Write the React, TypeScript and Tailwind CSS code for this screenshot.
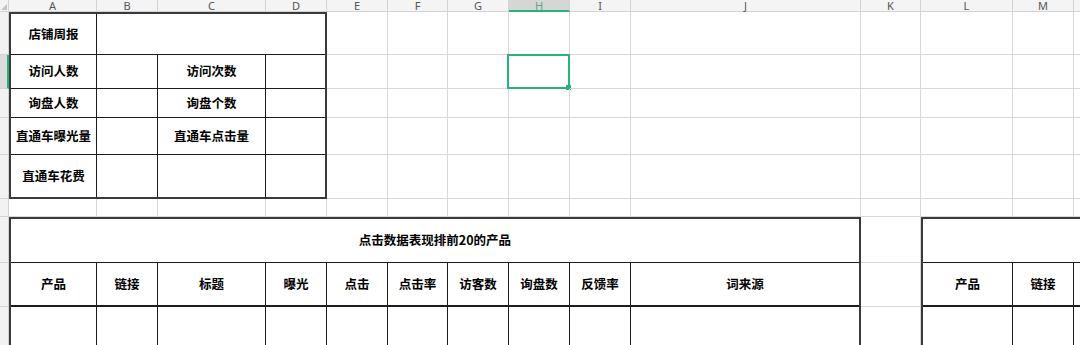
import React from 'react';

const cols = [
  { l: 'A', w: 'w-[88px]' },
  { l: 'B', w: 'w-[61px]' },
  { l: 'C', w: 'w-[108px]' },
  { l: 'D', w: 'w-[61px]' },
  { l: 'E', w: 'w-[61px]' },
  { l: 'F', w: 'w-[60px]' },
  { l: 'G', w: 'w-[61px]' },
  { l: 'H', w: 'w-[61px]' },
  { l: 'I', w: 'w-[61px]' },
  { l: 'J', w: 'w-[230px]' },
  { l: 'K', w: 'w-[60px]' },
  { l: 'L', w: 'w-[92px]' },
  { l: 'M', w: 'w-[61px]' },
  { l: 'N', w: 'w-[80px]' },
];

const rowHeads = [
  'h-[43px]',
  'h-[34px]',
  'h-[29px]',
  'h-[37px]',
  'h-[44px]',
  'h-[18px]',
  'h-[46px]',
  'h-[44px]',
  'h-[60px]',
];

const topRows = ['h-[43px]', 'h-[34px]', 'h-[29px]', 'h-[37px]', 'h-[44px]'];

const font = { fontFamily: '"Noto Sans CJK SC", "Noto Sans", sans-serif' };

function T({ children, cls = '' }: { children?: React.ReactNode; cls?: string }) {
  return (
    <div
      className={`flex items-center justify-center border-[#1c1c1c] text-[12.5px] font-bold text-black leading-none whitespace-nowrap ${cls}`}
      style={font}
    >
      {children}
    </div>
  );
}

export default function App() {
  const rightTop = cols.slice(4); // E..N
  return (
    <div className="w-[1080px] h-[345px] overflow-hidden bg-white select-none">
      {/* Column header */}
      <div className="flex h-[12px]">
        <div className="w-[9px] shrink-0 bg-[#f3f3f3] border-r border-b border-[#d2d2d8] relative overflow-hidden">
          <svg width="9" height="12" className="block">
            <polygon points="1,10 7,10 7,4" fill="#c4c4c4" />
          </svg>
        </div>
        {cols.map((c) => (
          <div
            key={c.l}
            className={`${c.w} shrink-0 flex items-center justify-center border-r text-[11px] leading-[11px] ${
              c.l === 'H'
                ? 'bg-[#d6d6d6] border-b-2 border-b-[#2bb07a] border-r-[#d2d2d8] text-[#5aa583]'
                : 'bg-[#f4f4f4] border-b border-[#d2d2d8] text-[#555]'
            }`}
            style={{ fontFamily: '"Noto Sans", "Open Sans", sans-serif' }}
          >
            {c.l}
          </div>
        ))}
      </div>

      <div className="flex">
        {/* Row header strip */}
        <div className="w-[9px] shrink-0 flex flex-col">
          {rowHeads.map((h, i) => (
            <div
              key={i}
              className={`${h} border-b border-[#d2d2d8] ${
                i === 1 ? 'bg-[#dcdcdc] border-r-2 border-r-[#2bb07a]' : 'bg-[#f2f2f2] border-r border-r-[#d2d2d8]'
              }`}
            />
          ))}
        </div>

        {/* Sheet */}
        <div className="flex flex-col">
          {/* Top band: rows 1-5 */}
          <div className="flex h-[187px]">
            <div className="w-[318px] h-[187px] shrink-0 border-2 border-[#3a3a3a] grid grid-cols-[86px_61px_108px_59px] grid-rows-[41px_34px_29px_37px_42px]">
              <T cls="border-r border-b">店铺周报</T>
              <T cls="col-span-3 border-b" />

              <T cls="border-r border-b">访问人数</T>
              <T cls="border-r border-b" />
              <T cls="border-r border-b">访问次数</T>
              <T cls="border-b" />

              <T cls="border-r border-b">询盘人数</T>
              <T cls="border-r border-b" />
              <T cls="border-r border-b">询盘个数</T>
              <T cls="border-b" />

              <T cls="border-r border-b">直通车曝光量</T>
              <T cls="border-r border-b" />
              <T cls="border-r border-b">直通车点击量</T>
              <T cls="border-b" />

              <T cls="border-r">直通车花费</T>
              <T cls="border-r" />
              <T cls="border-r" />
              <T />
            </div>

            {rightTop.map((c) => (
              <div key={c.l} className={`${c.w} shrink-0 flex flex-col`}>
                {topRows.map((h, i) => (
                  <div key={i} className={`${h} border-r border-b border-[#d6d6dc] relative`}>
                    {c.l === 'H' && i === 1 && (
                      <div className="absolute -left-[2px] -top-[1px] w-[63px] h-[35px] border-2 border-[#2bb07a]">
                        <div className="absolute -right-[3px] -bottom-[3px] w-[5px] h-[5px] bg-[#2bb07a]" />
                      </div>
                    )}
                  </div>
                ))}
              </div>
            ))}
          </div>

          {/* Row 6 */}
          <div className="flex h-[18px]">
            {cols.map((c) => (
              <div key={c.l} className={`${c.w} shrink-0 border-r border-b border-[#d6d6dc]`} />
            ))}
          </div>

          {/* Bottom band: rows 7-9 */}
          <div className="flex h-[128px]">
            <div className="w-[852px] shrink-0 border-t-2 border-l-2 border-r-2 border-[#3a3a3a] grid grid-cols-[86px_61px_108px_61px_61px_60px_61px_61px_61px_228px] grid-rows-[44px_44px_60px]">
              <T cls="col-span-10 border-b">点击数据表现排前20的产品</T>

              <T cls="border-r border-b-2">产品</T>
              <T cls="border-r border-b-2">链接</T>
              <T cls="border-r border-b-2">标题</T>
              <T cls="border-r border-b-2">曝光</T>
              <T cls="border-r border-b-2">点击</T>
              <T cls="border-r border-b-2">点击率</T>
              <T cls="border-r border-b-2">访客数</T>
              <T cls="border-r border-b-2">询盘数</T>
              <T cls="border-r border-b-2">反馈率</T>
              <T cls="border-b-2">词来源</T>

              <T cls="border-r" />
              <T cls="border-r" />
              <T cls="border-r" />
              <T cls="border-r" />
              <T cls="border-r" />
              <T cls="border-r" />
              <T cls="border-r" />
              <T cls="border-r" />
              <T cls="border-r" />
              <T />
            </div>

            <div className="w-[60px] shrink-0 flex flex-col">
              <div className="h-[46px] border-r border-b border-[#d6d6dc]" />
              <div className="h-[44px] border-r border-b border-[#d6d6dc]" />
              <div className="h-[38px] border-r border-[#d6d6dc]" />
            </div>

            <div className="w-[160px] shrink-0 border-t-2 border-l-2 border-[#3a3a3a] grid grid-cols-[90px_61px_100px] grid-rows-[44px_44px_60px]">
              <T cls="col-span-3 border-b" />
              <T cls="border-r border-b-2">产品</T>
              <T cls="border-r border-b-2">链接</T>
              <T cls="border-b-2" />
              <T cls="border-r" />
              <T cls="border-r" />
              <T />
            </div>
          </div>
        </div>
      </div>
    </div>
  );
}
